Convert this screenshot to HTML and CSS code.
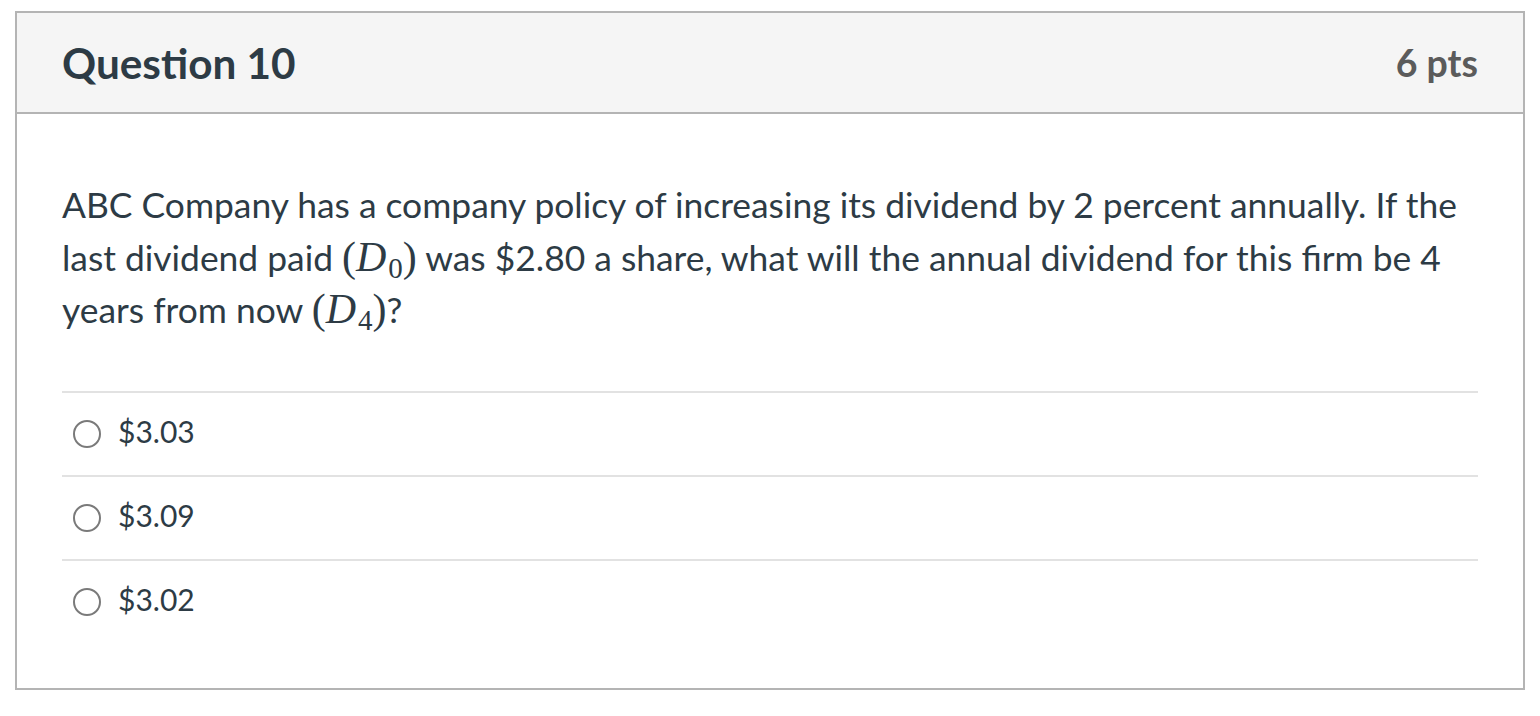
FILE: index.html
```html
<!DOCTYPE html>
<html lang="en">
<head>
<meta charset="utf-8">
<title>Question 10</title>
<link rel="stylesheet" href="styles.css">
</head>
<body>
<div class="question">
  <div class="header">
    <h2 class="title">Question 10</h2>
    <div class="points">6 pts</div>
  </div>
  <div class="content">
    <p class="text">ABC Company has a company policy of increasing its dividend by 2 percent annually. If the last dividend paid <span class="math">(<i>D</i><sub>0</sub>)</span> was $2.80 a share, what will the annual dividend for this firm be 4 years from now <span class="math">(<i>D</i><sub>4</sub>)</span>?</p>
    <div class="answers">
      <label class="answer"><span class="radio"></span><span class="answer-text">$3.03</span></label>
      <label class="answer"><span class="radio"></span><span class="answer-text">$3.09</span></label>
      <label class="answer"><span class="radio"></span><span class="answer-text">$3.02</span></label>
    </div>
  </div>
</div>
</body>
</html>
```

FILE: styles.css
```css
html, body {
  margin: 0;
  padding: 0;
  background: #ffffff;
}
body {
  font-family: Lato, "Open Sans", sans-serif;
  color: #2d3b45;
  padding: 11px 0 0 15px;
}
.question {
  width: 1506px;
  border: 2px solid #b4b4b4;
  background: #fff;
}
.header {
  display: flex;
  justify-content: space-between;
  align-items: center;
  height: 99px;
  padding: 0 45px;
  background: #f5f5f5;
  border-bottom: 2px solid #b4b4b4;
}
.title {
  margin: 0;
  font-size: 42.3px;
  font-weight: 700;
  color: #2d3b45;
}
.points {
  font-size: 37.5px;
  font-weight: 700;
  color: #5b5b5b;
}
.content {
  padding: 65px 45px 45px;
}
.text {
  margin: 0;
  font-size: 35.4px;
  line-height: 52.5px;
}
.math {
  font-family: "Liberation Serif", "DejaVu Serif", serif;
  font-size: 42px;
  line-height: 0;
}
.math i {
  font-style: italic;
  padding-right: 2px;
}
.math sub {
  font-size: 29px;
  line-height: 0;
  vertical-align: -7px;
}
.answers {
  margin-top: 54px;
}
.answer {
  display: flex;
  align-items: center;
  height: 82px;
  padding-left: 11px;
  border-top: 2px solid #e2e2e2;
}
.radio {
  width: 24px;
  height: 24px;
  border: 2px solid #7a7a7a;
  border-radius: 50%;
  margin-right: 17px;
  flex: none;
}
.answer-text {
  font-size: 30px;
  padding-bottom: 6px;
}
```
